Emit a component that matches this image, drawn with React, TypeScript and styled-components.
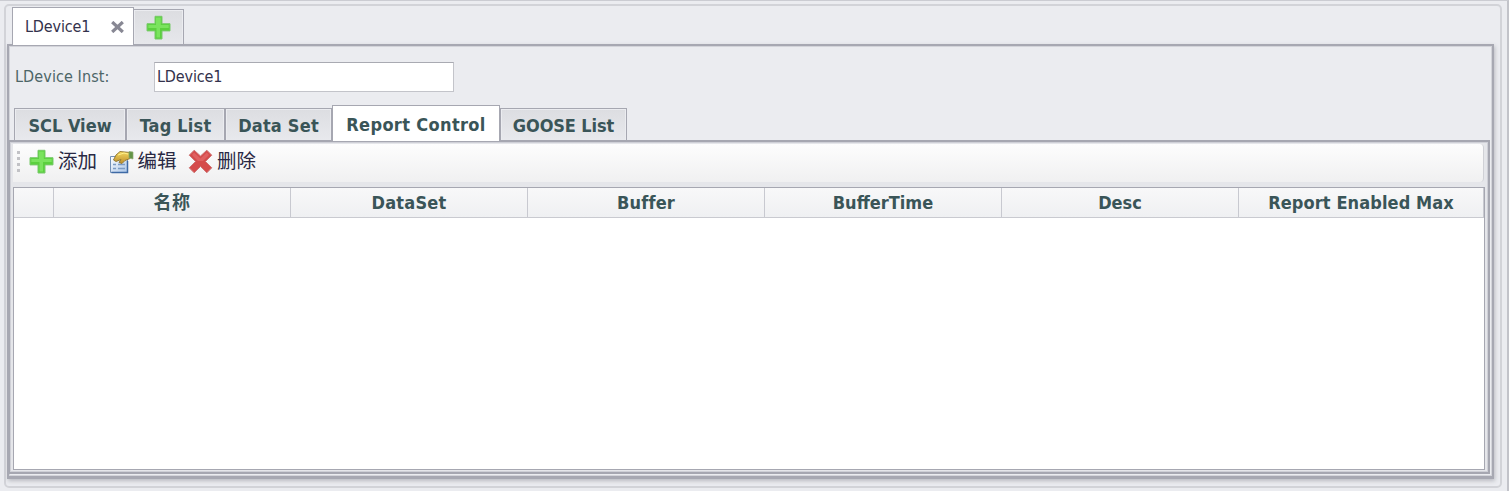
import React from 'react';
import styled, { createGlobalStyle, css } from 'styled-components';

const GlobalStyle = createGlobalStyle`
  * { box-sizing: border-box; }
  html, body { margin: 0; padding: 0; background: #ebecf0; overflow: hidden; }
  body { font-family: "DejaVu Sans Condensed", "DejaVu Sans", "Noto Sans CJK SC", sans-serif; }
`;

const Page = styled.div`
  width: 1509px;
  height: 491px;
  padding: 3px 5px 3px 4px;
  border-top: 1px solid #cbccd2;
  border-right: 2px solid #c2c3c9;
  background: #ebecf0;
`;

const OuterPanel = styled.div`
  height: 484px;
  width: 1498px;
  display: flex;
  flex-direction: column;
  padding: 2px 7px 0 1px;
  border: 2px solid #d2d3d8;
  border-radius: 5px;
  background: #ebecf0;
`;

const DeviceTabs = styled.div`
  display: flex;
  align-items: flex-end;
  height: 36px;
  margin-left: 5px;
  flex: none;
  z-index: 1;
`;

const DeviceTab = styled.div<{ $active?: boolean }>`
  display: flex;
  align-items: center;
  ${p => p.$active ? css`
    width: 122px;
    height: 38px;
    margin-bottom: -1px;
    padding: 0 8px 0 12px;
    justify-content: space-between;
    border: solid #a6a7b1;
    border-width: 1px 1px 0;
    background: #fff;
  ` : css`
    width: 50px;
    height: 35px;
    padding-right: 1px;
    justify-content: center;
    border: solid #a6a7b1;
    border-width: 1px 1px 0 0;
    box-shadow: inset 1px 1px #ebecf0, inset -1px 0 #ebecf0;
    background: linear-gradient(#dcdde1, #e6e7eb);
  `}
`;

const Text = styled.span<{ $spacing?: number }>`
  font-size: 16px;
  line-height: 20px;
  letter-spacing: ${p => p.$spacing ?? -0.15}px;
  color: #33324c;
  white-space: nowrap;
`;

const DeviceFrame = styled.div`
  height: 435px;
  width: 1487px;
  flex: none;
  display: flex;
  flex-direction: column;
  border: solid #a7a8b2;
  border-width: 2px 2px 3px 2px;
  box-shadow: inset 1px 1px #d3d4da, inset -1px -1px #d3d4da, 1px 2px 4px #babbc2;
  background: #ebecf0;
`;

const FieldRow = styled.div`
  display: flex;
  align-items: center;
  height: 60px;
  padding: 1px 0 0 6px;
`;

const FieldLabel = styled(Text)`
  width: 139px;
  color: #4d6567;
`;

const Input = styled.div`
  display: flex;
  align-items: center;
  width: 300px;
  height: 30px;
  padding-left: 2px;
  border: 1px solid #c3c4ca;
  border-top-color: #a9aab2;
  background: #fff;
`;

const ViewTabs = styled.div`
  display: flex;
  align-items: flex-end;
  height: 34px;
  padding-left: 5px;
  flex: none;
  z-index: 1;
`;

const ViewTab = styled.div<{ $width: number; $active?: boolean }>`
  display: flex;
  justify-content: center;
  align-items: center;
  width: ${p => p.$width}px;
  height: ${p => p.$active ? 36 : 32}px;
  margin-bottom: ${p => p.$active ? -1 : 0}px;
  padding-top: 2px;
  border: 1px solid #a6a7b1;
  border-bottom: 0;
  background: ${p => p.$active ? '#fff' : 'linear-gradient(#dcdde1, #e8e9ed)'};
  box-shadow: ${p => p.$active ? 'none' : 'inset 1px 1px #ebecf0, inset -1px 0 #ebecf0'};
`;

const BoldText = styled.span<{ $spacing?: number }>`
  font-size: 18px;
  line-height: 22px;
  font-weight: bold;
  letter-spacing: ${p => p.$spacing ?? 0}px;
  color: #3a5558;
  white-space: nowrap;
`;

const ViewFrame = styled.div`
  width: 1481px;
  height: 334px;
  flex: none;
  display: flex;
  flex-direction: column;
  padding: 2px 3px 2px 3px;
  border: solid #a6a7b1;
  border-width: 2px 2px 2px 1px;
  box-shadow: inset 1px 1px #cfd0d7, inset -1px -1px #cfd0d7;
  background: #e5e6ea;
`;

const Toolbar = styled.div`
  display: flex;
  align-items: center;
  height: 38px;
  width: 1471px;
  margin-bottom: 5px;
  padding: 0 0 3px 4px;
  border-radius: 0 4px 4px 0;
  border-right: 1px solid #d0d1d6;
  background: linear-gradient(#fdfdfd, #f0f0f1);
`;

const Grip = styled.div`
  display: flex;
  flex-direction: column;
  gap: 3px;
  margin-right: 9px;
  i { width: 3px; height: 3px; background: #c2c2c6; }
`;

const Action = styled.div`
  display: flex;
  align-items: center;
  width: 79.5px;
  gap: 4px;
  svg { flex: none; }
`;

const ActionText = styled.span`
  font: 19.5px/26px "Noto Sans CJK SC", sans-serif;
  margin-bottom: 3px;
  color: #292944;
  white-space: nowrap;
`;

const Grid = styled.div`
  width: 1472px;
  height: 283px;
  border: 1px solid #a6a7b1;
  background: #fff;
`;

const HeaderRow = styled.div`
  display: grid;
  grid-template-columns: 40px repeat(5, 237px) 1fr;
  height: 30px;
  border-bottom: 1px solid #c9cad0;
  background: linear-gradient(#f8f8f9, #eff0f2);
`;

const HeaderCell = styled.div`
  display: flex;
  align-items: center;
  justify-content: center;
  border-right: 1px solid #c8c9d0;
`;

const PlusIcon = () => (
  <svg width="25" height="25" viewBox="0 0 25 25">
    <path d="M9 1.300h7v7.400h8v7.200h-8V24H9v-8.100H1V8.700h8z" fill="#5bd03e" stroke="#78c96a" strokeWidth="1" />
    <path d="M10 2.500h4.800v7.400h7.900v3H14v9.600h-3.500v-9.600H2.300v-3H10z" fill="#82e766" opacity=".8" />
  </svg>
);

const EditIcon = () => (
  <svg width="25" height="25" viewBox="0 0 25 25">
    <defs>
      <linearGradient id="sheet" x2="1" y2="1"><stop stopColor="#fff" /><stop offset="1" stopColor="#a9c5e8" /></linearGradient>
      <linearGradient id="hand" x2="0" y2="1"><stop stopColor="#f5da60" /><stop offset="1" stopColor="#bd8e2c" /></linearGradient>
    </defs>
    <path d="M1.500 7.500h17v16h-17z" fill="url(#sheet)" stroke="#7491b6" />
    <path d="M18.500 12v11.500h-16" fill="none" stroke="#3e6aa5" strokeWidth="1.500" />
    <path d="M4 15.500h3m2 0h7M4 19.500h3m2 0h7" stroke="#7b9bc4" strokeWidth="1.500" />
    <path d="M4.500 11l2.500-5 4-3.500 10 1v6l-5 2-3 3-3-1 2-3-5 2z" fill="url(#hand)" stroke="#8d742f" strokeWidth=".9" />
    <path d="M9 6l6-2 4 1" stroke="#fff18e" fill="none" />
    <path d="M20 2.500l4 .5v7l-4-1z" fill="#639447" stroke="#8eaa70" strokeWidth=".7" />
  </svg>
);

const DeleteIcon = () => (
  <svg width="25" height="25" viewBox="0 0 25 25">
    <path d="M6.200 1.200L12.500 7l6.300-5.800 5 5-6.300 6.300 6.300 6.300-5 5-6.300-6.300-6.300 6.300-5-5 6.300-6.300-6.300-6.300z" fill="#d54b4b" stroke="#ce7777" strokeLinejoin="round" />
    <path d="M6 3.500l6.500 6 6.300-6 2.200 2.500-6 6H10L4 6z" fill="#e66e6e" opacity=".6" />
  </svg>
);

const CloseIcon = () => (
  <svg width="15" height="12" viewBox="0 0 15 12">
    <path d="M2.200 1l10.600 10m0-10l-10.600 10" stroke="#888894" strokeWidth="3.200" />
  </svg>
);

const tabs = [
  { name: 'SCL View', width: 112 },
  { name: 'Tag List', width: 99, spacing: 0.2 },
  { name: 'Data Set', width: 107, spacing: 0.2 },
  { name: 'Report Control', width: 168, spacing: 0.35, active: true },
  { name: 'GOOSE List', width: 127, spacing: -0.1 },
];

const columns = [
  { name: '' },
  { name: '名称', spacing: 0.5 },
  { name: 'DataSet', spacing: 0.2 },
  { name: 'Buffer', spacing: 0.2 },
  { name: 'BufferTime' },
  { name: 'Desc' },
  { name: 'Report Enabled Max', spacing: 0.1 },
];

const actions = [
  { name: '添加', Icon: PlusIcon },
  { name: '编辑', Icon: EditIcon },
  { name: '删除', Icon: DeleteIcon },
];

export default function App() {
  return (
    <>
      <GlobalStyle />
      <Page>
        <OuterPanel>
          <DeviceTabs>
            <DeviceTab $active><Text>LDevice1</Text><CloseIcon /></DeviceTab>
            <DeviceTab><PlusIcon /></DeviceTab>
          </DeviceTabs>
          <DeviceFrame>
            <FieldRow>
              <FieldLabel $spacing={0.1}>LDevice Inst:</FieldLabel>
              <Input><Text>LDevice1</Text></Input>
            </FieldRow>
            <ViewTabs>
              {tabs.map(t => (
                <ViewTab key={t.name} $width={t.width} $active={t.active}>
                  <BoldText $spacing={t.spacing}>{t.name}</BoldText>
                </ViewTab>
              ))}
            </ViewTabs>
            <ViewFrame>
              <Toolbar>
                <Grip><i /><i /><i /><i /></Grip>
                {actions.map(({ name, Icon }) => (
                  <Action key={name}><Icon /><ActionText>{name}</ActionText></Action>
                ))}
              </Toolbar>
              <Grid>
                <HeaderRow>
                  {columns.map(c => (
                    <HeaderCell key={c.name}><BoldText $spacing={c.spacing}>{c.name}</BoldText></HeaderCell>
                  ))}
                </HeaderRow>
              </Grid>
            </ViewFrame>
          </DeviceFrame>
        </OuterPanel>
      </Page>
    </>
  );
}
